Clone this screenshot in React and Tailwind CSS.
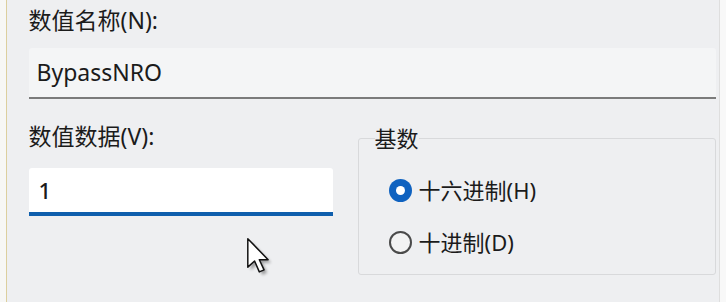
import React from 'react';

const font = "font-['Noto_Sans','Noto_Sans_CJK_SC',sans-serif]";

const Radio = ({ checked, label }) => (
  <div className="flex items-center h-[30px] gap-[7px]">
    {checked ? (
      <span className="w-[23px] h-[23px] shrink-0 rounded-full bg-[#0f62c0] flex items-center justify-center">
        <span className="w-[9px] h-[9px] rounded-full bg-white" />
      </span>
    ) : (
      <span className="w-[23px] h-[23px] shrink-0 rounded-full border-2 border-[#4a4a4a] bg-[#f3f3f3]" />
    )}
    <span className="text-[22px] leading-[30px] text-[#1b1b1b]">{label}</span>
  </div>
);

export default function App() {
  return (
    <div className={`relative w-[726px] h-[302px] flex bg-[#eeeff1] overflow-hidden ${font}`}>
      {/* left window edge */}
      <div className="w-[7px] h-full bg-[#f7f7f5] border-r border-[#dccf9e]" />

      {/* dialog body */}
      <div className="flex-1 flex flex-col pl-[22px] pr-[3px] pt-[5px]">
        <div className="text-[23px] leading-[30px] text-[#1b1b1b]">数值名称(N):</div>
        <div className="mt-[13px] h-[51px] w-[687px] bg-[#f4f5f6] border-b-2 border-[#7b7b7b] rounded-t-[3px] flex items-center pl-[8px]">
          <span className="text-[23px] text-[#1b1b1b]">BypassNRO</span>
        </div>

        <div className="flex items-start mt-[22px]">
          <div className="w-[304px] flex flex-col">
            <div className="text-[23px] leading-[30px] text-[#1b1b1b]">数值数据(V):</div>
            <div className="mt-[17px] h-[48px] bg-white border-b-[4px] border-[#0f5fad] rounded-t-[3px] flex items-center pl-[10px]">
              <span className="text-[22px] font-medium text-[#1b1b1b]">1</span>
            </div>
          </div>

          <fieldset className="ml-[25px] mt-[4px] w-[358px] h-[150px] border border-[#d8d9db] rounded-[3px] pl-[30px]">
            <legend className="ml-[-14px] text-[22px] leading-[26px] text-[#1b1b1b]">基数</legend>
            <div className="mt-[24px] flex flex-col gap-[22px]">
              <Radio checked label="十六进制(H)" />
              <Radio label="十进制(D)" />
            </div>
          </fieldset>
        </div>
      </div>

      {/* right window edge */}
      <div className="w-[8px] h-full bg-[#f8f8f8] border-l border-[#dedede]" />

      {/* mouse pointer */}
      <svg className="absolute left-[245px] top-[236px]" width="30" height="42" viewBox="0 0 22 31">
        <defs>
          <filter id="sh" x="-30%" y="-30%" width="160%" height="160%">
            <feGaussianBlur stdDeviation="1" />
          </filter>
        </defs>
        <path d="M3 3 L3 24 L8 19.5 L11.5 27.5 L15 26 L11.5 18.5 L18 18.5 Z" fill="#000" opacity="0.35" filter="url(#sh)" transform="translate(1.2 1.2)" />
        <path d="M2 2 L2 23 L7 18.5 L10.5 26.5 L14 25 L10.5 17.5 L17 17.5 Z" fill="#fff" stroke="#111" strokeWidth="1.1" strokeLinejoin="round" />
      </svg>
    </div>
  );
}
